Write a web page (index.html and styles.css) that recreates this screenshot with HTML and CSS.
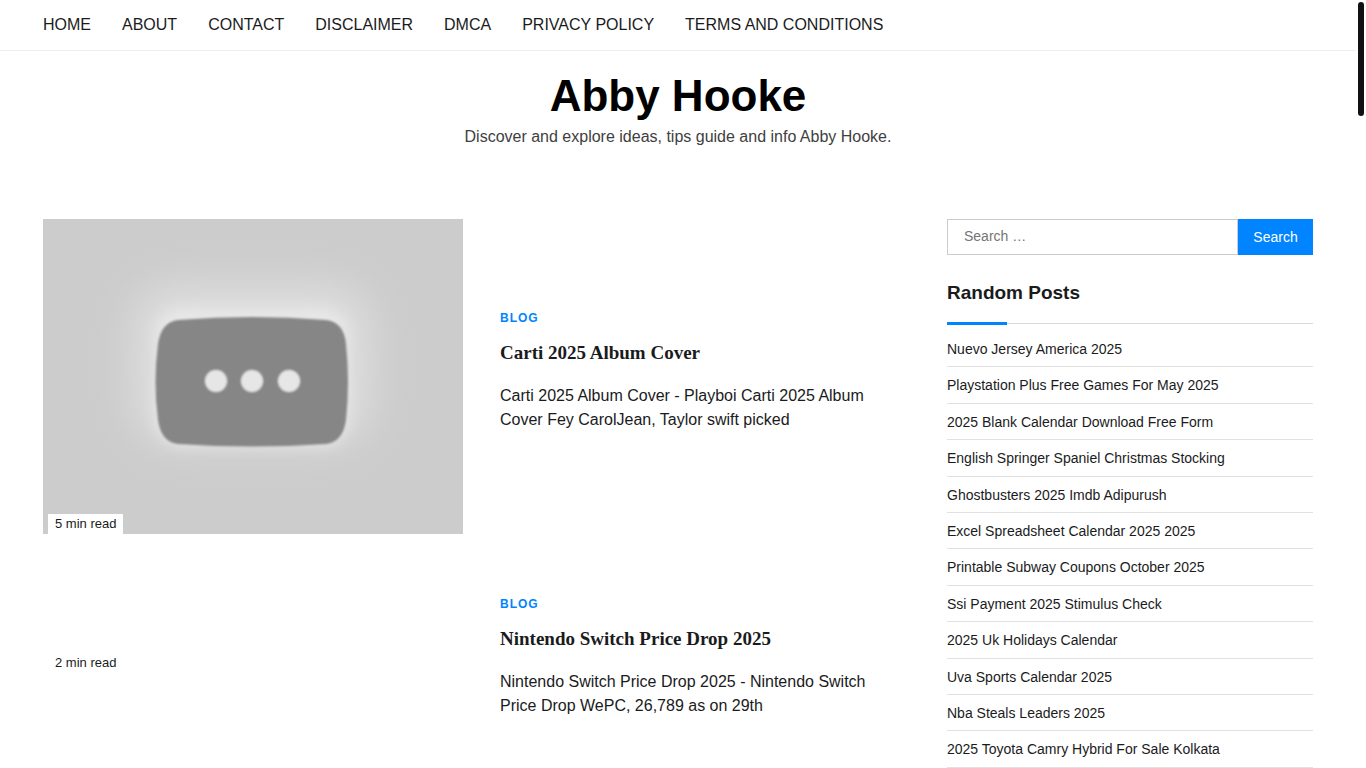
FILE: index.html
```
<!DOCTYPE html>
<html lang="en">
<head>
    <meta charset="UTF-8">
    <meta name="viewport" content="width=device-width, initial-scale=1.0">
    <title>Abby Hooke</title>
    <link rel="stylesheet" href="styles.css">
</head>
<body>
    <nav class="top-nav">
        <ul class="container menu">
            <li><a href="#">HOME</a></li>
            <li><a href="#">ABOUT</a></li>
            <li><a href="#">CONTACT</a></li>
            <li><a href="#">DISCLAIMER</a></li>
            <li><a href="#">DMCA</a></li>
            <li><a href="#">PRIVACY POLICY</a></li>
            <li><a href="#">TERMS AND CONDITIONS</a></li>
        </ul>
    </nav>
    <header class="site-header">
        <h1 class="site-title"><a href="#">Abby Hooke</a></h1>
        <p class="site-description">Discover and explore ideas, tips guide and info Abby Hooke.</p>
    </header>
    <div class="container content">
        <main class="posts">
            <article class="post">
                <a class="thumb" href="#" aria-label="Carti 2025 Album Cover">
                    <svg viewBox="0 0 420 315" aria-hidden="true">
                        <defs>
                            <filter id="glow" x="-50%" y="-50%" width="200%" height="200%">
                                <feGaussianBlur stdDeviation="20"/>
                            </filter>
                            <filter id="halo" x="-20%" y="-20%" width="140%" height="140%">
                                <feGaussianBlur stdDeviation="7"/>
                            </filter>
                            <filter id="soft">
                                <feGaussianBlur stdDeviation="1"/>
                            </filter>
                        </defs>
                        <rect width="420" height="315" fill="#ccc"/>
                        <rect x="90" y="66" width="238" height="158" rx="40" fill="#dedede" filter="url(#glow)"/>
                        <rect x="113" y="90" width="192" height="136" rx="26" fill="#e8e8e8" filter="url(#halo)"/>
                        <g filter="url(#soft)">
                            <path d="M135 101Q209 95 283 101Q301 103 303 125Q307 163 303 201Q300 223 283 225Q209 230 135 225Q118 223 115 201Q110 163 115 125Q118 103 135 101Z" fill="#868686"/>
                            <circle cx="173" cy="162" r="11" fill="#e6e6e6"/>
                            <circle cx="209" cy="162" r="11" fill="#e6e6e6"/>
                            <circle cx="246" cy="162" r="11" fill="#e6e6e6"/>
                        </g>
                    </svg>
                    <span class="read-time">5 min read</span>
                </a>
                <div class="post-body">
                    <a class="category" href="#">BLOG</a>
                    <h2 class="post-title"><a href="#">Carti 2025 Album Cover</a></h2>
                    <p class="excerpt">Carti 2025 Album Cover - Playboi Carti 2025 Album Cover Fey CarolJean, Taylor swift picked</p>
                </div>
            </article>
            <article class="post">
                <a class="thumb" href="#" aria-label="Nintendo Switch Price Drop 2025">
                    <span class="read-time">2 min read</span>
                </a>
                <div class="post-body">
                    <a class="category" href="#">BLOG</a>
                    <h2 class="post-title"><a href="#">Nintendo Switch Price Drop 2025</a></h2>
                    <p class="excerpt">Nintendo Switch Price Drop 2025 - Nintendo Switch Price Drop WePC, 26,789 as on 29th</p>
                </div>
            </article>
        </main>
        <aside class="sidebar">
            <form class="search-form">
                <input type="search" placeholder="Search …" aria-label="Search for">
                <button type="submit">Search</button>
            </form>
            <h2 class="widget-title">Random Posts</h2>
            <ul class="widget-list">
                <li><a href="#">Nuevo Jersey America 2025</a></li>
                <li><a href="#">Playstation Plus Free Games For May 2025</a></li>
                <li><a href="#">2025 Blank Calendar Download Free Form</a></li>
                <li><a href="#">English Springer Spaniel Christmas Stocking</a></li>
                <li><a href="#">Ghostbusters 2025 Imdb Adipurush</a></li>
                <li><a href="#">Excel Spreadsheet Calendar 2025 2025</a></li>
                <li><a href="#">Printable Subway Coupons October 2025</a></li>
                <li><a href="#">Ssi Payment 2025 Stimulus Check</a></li>
                <li><a href="#">2025 Uk Holidays Calendar</a></li>
                <li><a href="#">Uva Sports Calendar 2025</a></li>
                <li><a href="#">Nba Steals Leaders 2025</a></li>
                <li><a href="#">2025 Toyota Camry Hybrid For Sale Kolkata</a></li>
            </ul>
        </aside>
    </div>
    <div class="scroll-thumb"></div>
</body>
</html>
```
FILE: styles.css
```
* {
    margin: 0;
    padding: 0;
    box-sizing: border-box;
}
body {
    padding-right: 10px;
    background-color: #fff;
    color: #1a1b1c;
    font-family: "Liberation Sans", Arial, sans-serif;
    font-size: 16px;
    line-height: 24px;
}
a {
    color: inherit;
    text-decoration: none;
}
ul {
    list-style: none;
}
.container {
    max-width: 1310px;
    margin: 0 auto;
    padding: 0 20px;
}

/* header */
.top-nav {
    border-bottom: 1px solid #eee;
}
.menu {
    display: flex;
    flex-wrap: wrap;
    gap: 0 31px;
}
.menu a {
    display: block;
    padding: 13px 0;
}
.site-header {
    padding: 20px 20px 70px;
    text-align: center;
}
.site-title {
    padding-bottom: 4px;
    color: #000;
    font-size: 44px;
    line-height: 50px;
}
.site-description {
    color: #404040;
}

/* posts */
.content {
    display: flex;
    align-items: flex-start;
    gap: 64px;
}
.posts {
    flex: 1;
    display: flex;
    flex-direction: column;
    gap: 60px;
}
.post {
    display: flex;
    align-items: center;
    gap: 37px;
}
.thumb {
    position: relative;
    flex: 0 0 50%;
    min-height: 20px;
}
.thumb svg {
    display: block;
    width: 100%;
}
.read-time {
    position: absolute;
    left: 5px;
    bottom: 0;
    padding: 0 7px;
    background-color: #fff;
    font-size: 13px;
    line-height: 20px;
}
.post-body {
    flex: 1;
    padding-bottom: 13px;
}
.category {
    display: block;
    color: #0084ff;
    font-size: 12px;
    font-weight: bold;
    letter-spacing: 1px;
    line-height: 20px;
}
.post-title {
    margin: 12px 0 18px;
    font-family: "Liberation Serif", "Times New Roman", serif;
    font-size: 19px;
    line-height: 26px;
}

/* sidebar */
.sidebar {
    flex: 0 0 366px;
}
.search-form {
    display: flex;
}
.search-form input {
    flex: 1;
    min-width: 0;
    height: 36px;
    padding: 0 16px 2px;
    border: 1px solid #ccc;
    border-radius: 0;
    outline: none;
    font-family: inherit;
    font-size: 14px;
    -webkit-appearance: none;
    appearance: none;
}
.search-form input::placeholder {
    color: #757575;
}
.search-form button {
    min-width: 75px;
    border: none;
    background-color: #0084ff;
    color: #fff;
    font-family: inherit;
    font-size: 14px;
    cursor: pointer;
}
.widget-title {
    position: relative;
    margin: 24px 0 7px;
    padding-bottom: 17px;
    border-bottom: 1px solid #d8d8d8;
    font-size: 19px;
    line-height: 27px;
}
.widget-title::after {
    content: "";
    position: absolute;
    left: 0;
    bottom: -2px;
    width: 60px;
    height: 3px;
    background-color: #0084ff;
}
.widget-list li {
    padding: 7px 0 6px;
    border-bottom: 1px solid #e1e1e1;
    font-size: 14px;
    line-height: 1.6;
}

.scroll-thumb {
    position: fixed;
    top: 2px;
    right: 2px;
    width: 6px;
    height: 114px;
    border-radius: 3px;
    background-color: #111;
}
```
